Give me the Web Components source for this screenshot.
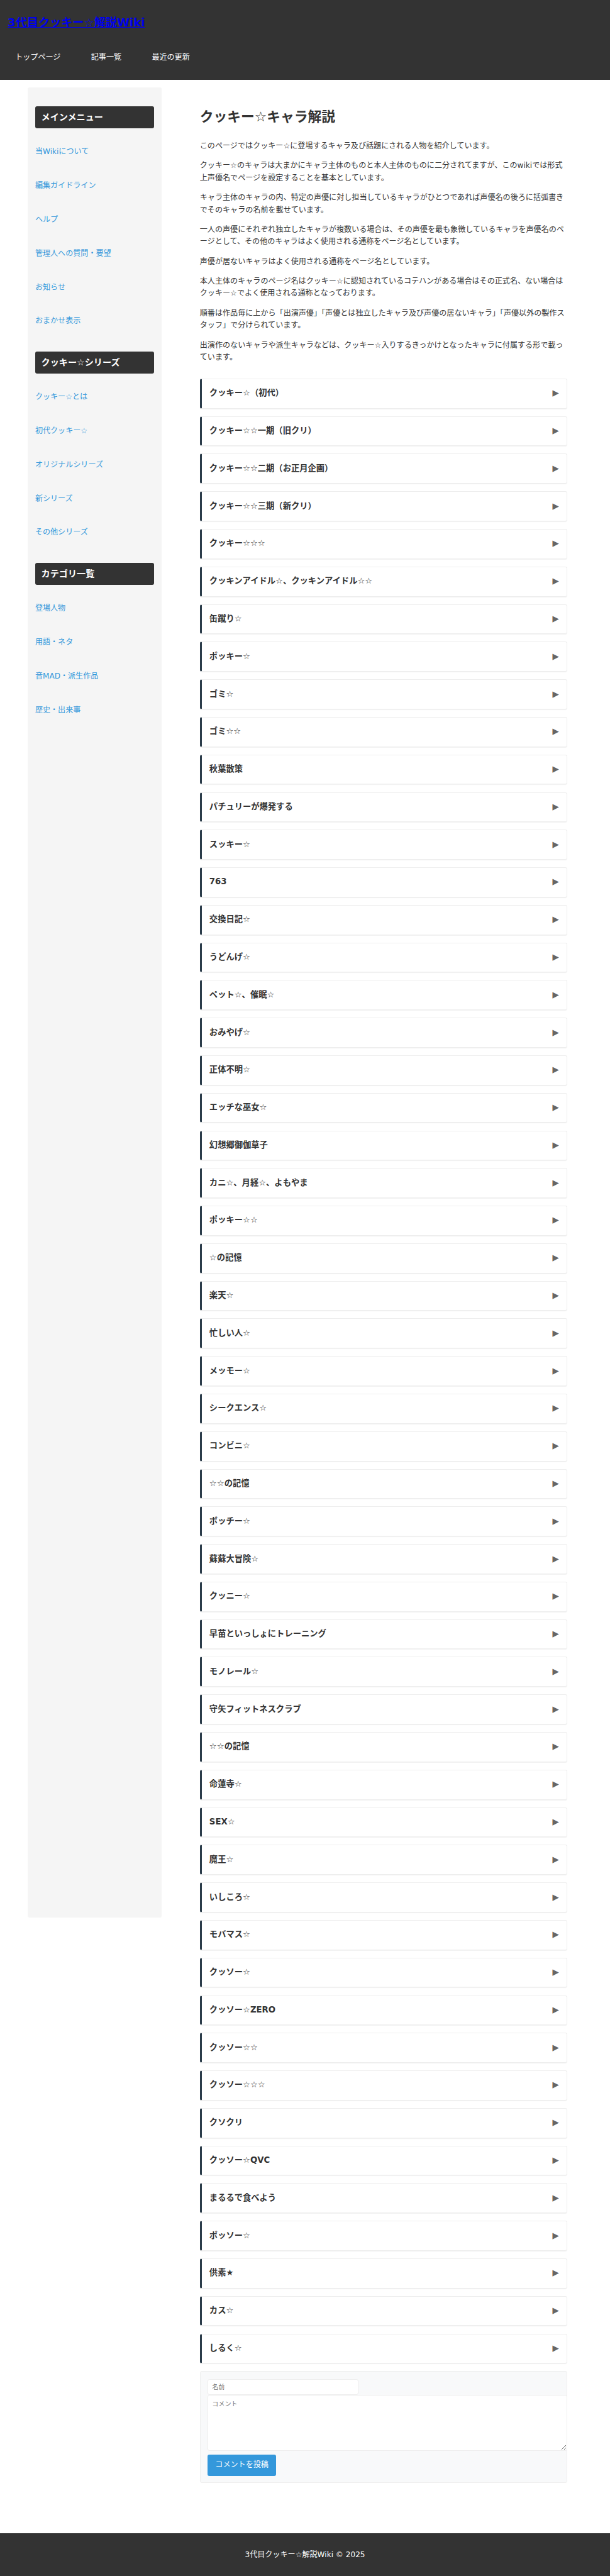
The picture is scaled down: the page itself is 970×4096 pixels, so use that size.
<!DOCTYPE html>
<html lang="ja">
<head>
<meta charset="utf-8">
<title>クッキー☆キャラ解説</title>
<style>
  html {
    font-size: 12.088px;
  }

  body {
    margin: 0;
    background: white;
    color: #333;
    font-family: "DejaVu Sans", "Noto Sans CJK JP", sans-serif;
    line-height: 1.6;
  }
</style>
</head>
<body>
<wiki-page>
  <wiki-header slot="header" site="3代目クッキー☆解説Wiki">
    <a href="#">トップページ</a>
    <a href="#">記事一覧</a>
    <a href="#">最近の更新</a>
  </wiki-header>

  <side-menu slot="side" heading="メインメニュー">
    <a href="#">当Wikiについて</a>
    <a href="#">編集ガイドライン</a>
    <a href="#">ヘルプ</a>
    <a href="#">管理人への質問・要望</a>
    <a href="#">お知らせ</a>
    <a href="#">おまかせ表示</a>
  </side-menu>
  <side-menu slot="side" heading="クッキー☆シリーズ">
    <a href="#">クッキー☆とは</a>
    <a href="#">初代クッキー☆</a>
    <a href="#">オリジナルシリーズ</a>
    <a href="#">新シリーズ</a>
    <a href="#">その他シリーズ</a>
  </side-menu>
  <side-menu slot="side" heading="カテゴリ一覧">
    <a href="#">登場人物</a>
    <a href="#">用語・ネタ</a>
    <a href="#">音MAD・派生作品</a>
    <a href="#">歴史・出来事</a>
  </side-menu>

  <wiki-article heading="クッキー☆キャラ解説">
    <p>このページではクッキー☆に登場するキャラ及び話題にされる人物を紹介しています。</p>
    <p>クッキー☆のキャラは大まかにキャラ主体のものと本人主体のものに二分されてますが、このwikiでは形式上声優名でページを設定することを基本としています。</p>
    <p>キャラ主体のキャラの内、特定の声優に対し担当しているキャラがひとつであれば声優名の後ろに括弧書きでそのキャラの名前を載せています。</p>
    <p>一人の声優にそれぞれ独立したキャラが複数いる場合は、その声優を最も象徴しているキャラを声優名のページとして、その他のキャラはよく使用される通称をページ名としています。</p>
    <p>声優が居ないキャラはよく使用される通称をページ名としています。</p>
    <p>本人主体のキャラのページ名はクッキー☆に認知されているコテハンがある場合はその正式名、ない場合はクッキー☆でよく使用される通称となっております。</p>
    <p>順番は作品毎に上から「出演声優」「声優とは独立したキャラ及び声優の居ないキャラ」「声優以外の製作スタッフ」で分けられています。</p>
    <p>出演作のないキャラや派生キャラなどは、クッキー☆入りするきっかけとなったキャラに付属する形で載っています。</p>
  </wiki-article>
  <fold-list></fold-list>
  <comment-form></comment-form>

  <wiki-footer slot="footer">3代目クッキー☆解説Wiki © 2025</wiki-footer>
</wiki-page>

<script>
class WikiPage extends HTMLElement {
  constructor () {
    super()
    this.attachShadow({ mode: 'open' }).innerHTML = `
      <style>
        :host {
          display: flex;
          flex-direction: column;
          height: 4096px;
        }

        .columns {
          flex: 1;
          display: flex;
          align-items: flex-start;
          padding: 1rem 5.65rem 0 3.625rem;
        }

        aside {
          box-sizing: border-box;
          width: 17.625rem;
          height: 240.75rem;
          padding: 2.5rem 1rem 0;
          background: #f5f5f5;
          border-radius: .25rem;
        }

        main {
          flex: 1;
          min-width: 0;
          margin-left: 5.04rem;
          padding-top: 2.45rem;
        }
      </style>
      <slot name="header"></slot>
      <div class="columns">
        <aside><slot name="side"></slot></aside>
        <main><slot></slot></main>
      </div>
      <slot name="footer"></slot>
    `
  }
}

class WikiHeader extends HTMLElement {
  connectedCallback () {
    this.attachShadow({ mode: 'open' }).innerHTML = `
      <style>
        :host {
          display: block;
          box-sizing: border-box;
          height: 10.5rem;
          padding: 1.7rem 1rem 0;
          background: #333;
        }

        h1 {
          margin: 0;
          font-size: 1.5rem;
        }

        h1 a {
          color: #0000ee;
        }

        nav {
          display: flex;
          gap: 4rem;
          margin-top: 2.72rem;
          padding-left: 1rem;
        }

        ::slotted(a) {
          color: white;
          text-decoration: none;
        }
      </style>
      <h1><a href="#">${this.getAttribute('site')}</a></h1>
      <nav><slot></slot></nav>
    `
  }
}

class SideMenu extends HTMLElement {
  connectedCallback () {
    this.attachShadow({ mode: 'open' }).innerHTML = `
      <style>
        :host {
          display: block;
          margin-bottom: 1.75rem;
        }

        h3 {
          margin: 0 0 .94rem;
          padding: .5rem .8rem;
          background: #333;
          border-radius: .25rem;
          color: white;
          font-size: 1.17rem;
        }

        ::slotted(a) {
          display: flex;
          align-items: center;
          height: 4.45rem;
          color: #3498db;
          text-decoration: none;
        }
      </style>
      <h3>${this.getAttribute('heading')}</h3>
      <slot></slot>
    `
  }
}

class WikiArticle extends HTMLElement {
  connectedCallback () {
    this.attachShadow({ mode: 'open' }).innerHTML = `
      <style>
        :host {
          display: block;
          margin-bottom: 1.95rem;
        }

        h1 {
          margin: 0 0 1.62rem;
          font-size: 1.8rem;
        }

        ::slotted(p) {
          margin: 0 0 1rem;
        }

        ::slotted(p:last-child) {
          margin: 0;
        }
      </style>
      <h1>${this.getAttribute('heading')}</h1>
      <slot></slot>
    `
  }
}

class FoldItem extends HTMLElement {
  constructor () {
    super()
    this.attachShadow({ mode: 'open' }).innerHTML = `
      <style>
        :host {
          display: flex;
          justify-content: space-between;
          box-sizing: border-box;
          height: 3.947rem;
          padding: .94rem 1rem 0;
          border: 1px solid #eee;
          border-left: .25rem solid #2b3c4a;
          border-radius: .25rem;
          box-shadow: 0 1px 1px rgba(0, 0, 0, .06);
          font-size: 1.1rem;
          font-weight: bold;
          cursor: pointer;
        }

        .arrow {
          color: #666;
        }
      </style>
      <slot></slot>
      <span class="arrow">▶</span>
    `
  }
}

const titles = [
  'クッキー☆（初代）',
  'クッキー☆☆一期（旧クリ）',
  'クッキー☆☆二期（お正月企画）',
  'クッキー☆☆三期（新クリ）',
  'クッキー☆☆☆',
  'クッキンアイドル☆、クッキンアイドル☆☆',
  '缶蹴り☆',
  'ポッキー☆',
  'ゴミ☆',
  'ゴミ☆☆',
  '秋葉散策',
  'パチュリーが爆発する',
  'スッキー☆',
  '763',
  '交換日記☆',
  'うどんげ☆',
  'ペット☆、催眠☆',
  'おみやげ☆',
  '正体不明☆',
  'エッチな巫女☆',
  '幻想郷御伽草子',
  'カニ☆、月経☆、よもやま',
  'ポッキー☆☆',
  '☆の記憶',
  '楽天☆',
  '忙しい人☆',
  'メッモー☆',
  'シークエンス☆',
  'コンビニ☆',
  '☆☆の記憶',
  'ボッチー☆',
  '蘇蘇大冒険☆',
  'クッニー☆',
  '早苗といっしょにトレーニング',
  'モノレール☆',
  '守矢フィットネスクラブ',
  '☆☆の記憶',
  '命蓮寺☆',
  'SEX☆',
  '魔王☆',
  'いしころ☆',
  'モバマス☆',
  'クッソー☆',
  'クッソー☆ZERO',
  'クッソー☆☆',
  'クッソー☆☆☆',
  'クソクリ',
  'クッソー☆QVC',
  'まるるで食べよう',
  'ポッソー☆',
  '供素★',
  'カス☆',
  'しるく☆'
]

class FoldList extends HTMLElement {
  constructor () {
    super()
    this.attachShadow({ mode: 'open' }).innerHTML = `
      <style>
        :host {
          display: flex;
          flex-direction: column;
          gap: 1rem;
          margin-bottom: 1rem;
        }
      </style>
      ${titles.map(title => `<fold-item>${title}</fold-item>`).join('')}
    `
  }
}

class CommentForm extends HTMLElement {
  constructor () {
    super()
    this.attachShadow({ mode: 'open' }).innerHTML = `
      <style>
        :host {
          display: block;
          box-sizing: border-box;
          height: 14.69rem;
          padding: 1rem .95rem;
          background: #f8f9fa;
          border: 1px solid #eee;
          border-radius: .25rem;
        }

        input,
        textarea {
          display: block;
          box-sizing: border-box;
          margin: 0;
          padding: .5rem;
          background: white;
          border: 1px solid #eee;
          border-radius: .25rem;
          font: .8333rem/1.55 "DejaVu Sans", "Noto Sans CJK JP", sans-serif;
        }

        input {
          width: 19.8rem;
          height: 2.02rem;
          padding: 0 .5rem;
        }

        textarea {
          width: 47.3rem;
          height: 7.35rem;
          margin-top: .04rem;
        }

        button {
          display: block;
          height: 2.77rem;
          margin-top: .5rem;
          padding: 0 1rem;
          background: #3498db;
          border: 0;
          border-radius: .25rem;
          color: white;
          font: 1rem/1.6 "DejaVu Sans", "Noto Sans CJK JP", sans-serif;
        }
      </style>
      <input type="text" placeholder="名前">
      <textarea placeholder="コメント"></textarea>
      <button type="button">コメントを投稿</button>
    `
  }
}

class WikiFooter extends HTMLElement {
  constructor () {
    super()
    this.attachShadow({ mode: 'open' }).innerHTML = `
      <style>
        :host {
          display: flex;
          align-items: center;
          justify-content: center;
          height: 5.62rem;
          padding-top: .08rem;
          box-sizing: border-box;
          background: #333;
          color: white;
        }
      </style>
      <slot></slot>
    `
  }
}

customElements.define('wiki-page', WikiPage)
customElements.define('wiki-header', WikiHeader)
customElements.define('side-menu', SideMenu)
customElements.define('wiki-article', WikiArticle)
customElements.define('fold-item', FoldItem)
customElements.define('fold-list', FoldList)
customElements.define('comment-form', CommentForm)
customElements.define('wiki-footer', WikiFooter)
</script>
</body>
</html>
